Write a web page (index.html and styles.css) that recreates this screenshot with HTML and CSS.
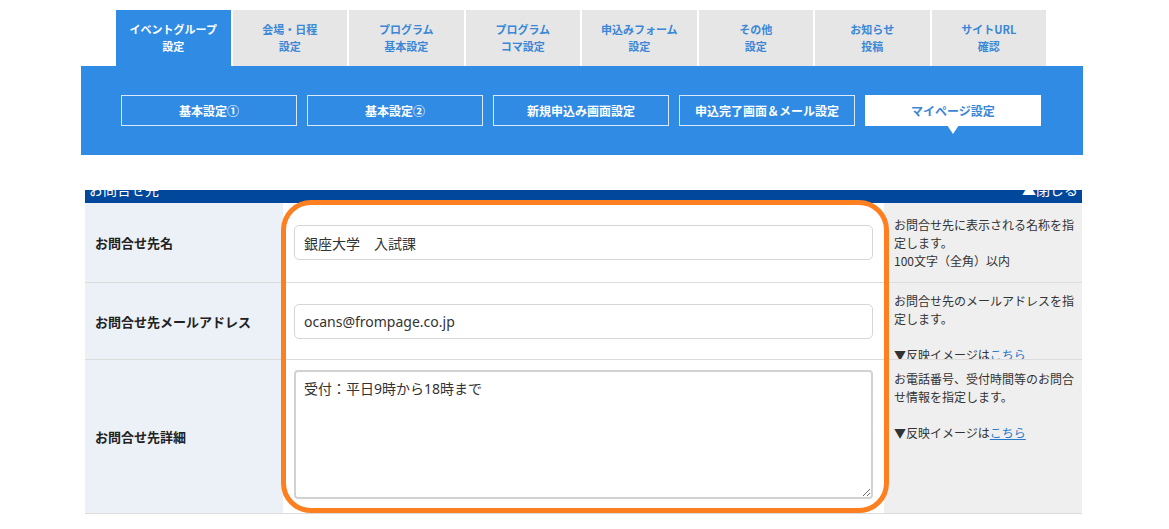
FILE: index.html
```html
<!DOCTYPE html>
<html lang="ja">
<head>
    <meta charset="UTF-8">
    <meta name="viewport" content="width=device-width, initial-scale=1.0">
    <title>お問合せ先設定</title>
    <link rel="stylesheet" href="styles.css">
</head>
<body>

    <!-- Step navigation -->
    <nav class="step-nav">
        <ul class="tabs">
            <li class="tab is-active">イベントグループ<br>設定</li>
            <li class="tab">会場・日程<br>設定</li>
            <li class="tab">プログラム<br>基本設定</li>
            <li class="tab">プログラム<br>コマ設定</li>
            <li class="tab">申込みフォーム<br>設定</li>
            <li class="tab">その他<br>設定</li>
            <li class="tab">お知らせ<br>投稿</li>
            <li class="tab">サイトURL<br>確認</li>
        </ul>
        <div class="subnav">
            <a class="sub-btn">基本設定①</a>
            <a class="sub-btn">基本設定②</a>
            <a class="sub-btn">新規申込み画面設定</a>
            <a class="sub-btn">申込完了画面＆メール設定</a>
            <a class="sub-btn is-current">マイページ設定</a>
        </div>
    </nav>

    <!-- Contact settings -->
    <section class="contact">
        <div class="contact-head">
            <span>お問合せ先</span>
            <span>▲閉じる</span>
        </div>

        <div class="row row--name">
            <div class="label">お問合せ先名</div>
            <div class="field">
                <input class="text-input" type="text" value="銀座大学　入試課">
            </div>
            <div class="help">
                お問合せ先に表示される名称を指定します。<br>
                100文字（全角）以内
            </div>
        </div>

        <div class="row row--mail">
            <div class="label">お問合せ先メールアドレス</div>
            <div class="field">
                <input class="text-input" type="text" value="ocans@frompage.co.jp">
            </div>
            <div class="help">
                お問合せ先のメールアドレスを指定します。<br>
                <br>
                ▼反映イメージは<a href="#">こちら</a>
            </div>
        </div>

        <div class="row row--detail">
            <div class="label">お問合せ先詳細</div>
            <div class="field">
                <textarea class="text-area">受付：平日9時から18時まで</textarea>
            </div>
            <div class="help">
                お電話番号、受付時間等のお問合せ情報を指定します。<br>
                <br>
                ▼反映イメージは<a href="#">こちら</a>
            </div>
        </div>

        <div class="highlight"></div>
    </section>

</body>
</html>
```

FILE: styles.css
```css
body {
    margin: 0;
    font-family: "Noto Sans", "Noto Sans CJK JP", sans-serif;
    color: #333;
    background-color: #fff;
}

/* step navigation */
.step-nav {
    margin: 10px 0 0 81px;
    width: 1002px;
}
.tabs {
    display: flex;
    gap: 2px;
    margin: 0;
    padding: 0 0 0 35px;
    list-style: none;
}
.tab {
    width: 114.5px;
    height: 56px;
    display: flex;
    align-items: center;
    justify-content: center;
    text-align: center;
    background-color: #e6e6e6;
    color: #3b86d6;
    font: bold 11px/17px "Noto Sans CJK JP", sans-serif;
}
.tab.is-active {
    background-color: #2f8be4;
    color: #fff;
}
.subnav {
    display: flex;
    align-items: flex-start;
    gap: 10px;
    height: 89px;
    box-sizing: border-box;
    padding: 29px 0 0 40px;
    background-color: #2f8be4;
}
.sub-btn {
    position: relative;
    display: flex;
    align-items: center;
    justify-content: center;
    width: 176px;
    height: 31px;
    box-sizing: border-box;
    border: 1px solid #d9e9fa;
    color: #fff;
    font: bold 12px "Noto Sans CJK JP", sans-serif;
}
.sub-btn.is-current {
    background-color: #fff;
    border-color: #fff;
    color: #3b86d6;
}
.sub-btn.is-current::after {
    content: "";
    position: absolute;
    top: 100%;
    left: 50%;
    margin-left: -6px;
    border-left: 6px solid transparent;
    border-right: 6px solid transparent;
    border-top: 9px solid #fff;
}

/* contact table */
.contact {
    position: relative;
    width: 997px;
    margin: 35px 0 0 85px;
}
.contact-head {
    display: flex;
    justify-content: space-between;
    height: 13px;
    overflow: hidden;
    padding: 0 4px;
    background-color: #01479b;
    color: #fff;
    font: 14px/16px "Noto Sans CJK JP", sans-serif;
}
.contact-head span {
    margin-top: -9px;
}
.row {
    display: grid;
    grid-template-columns: 198px 1fr 198px;
    border-bottom: 1px solid #dcdcdc;
}
.row--name {
    grid-template-rows: 79px;
}
.row--mail {
    grid-template-rows: 76px;
}
.row--detail {
    grid-template-rows: 153px;
}
.label {
    display: flex;
    align-items: center;
    padding-left: 10px;
    background-color: #ecf0f7;
    color: #222;
    font: bold 13px "Noto Sans CJK JP", sans-serif;
}
.field {
    display: flex;
    align-items: center;
    padding: 0 11px;
}
.row--detail .field {
    align-items: flex-start;
    padding-top: 10px;
}
.text-input {
    width: 100%;
    height: 35px;
    box-sizing: border-box;
    padding: 0 9px;
    border: 1px solid #d6d6d6;
    border-radius: 5px;
    color: #333;
    font: 14px "Noto Sans", "Noto Sans CJK JP", sans-serif;
}
.text-area {
    width: 100%;
    height: 129px;
    box-sizing: border-box;
    padding: 7px 8px;
    border: 2px solid #d2d2d2;
    border-radius: 4px;
    color: #333;
    font: 14px/20px "Noto Sans", "Noto Sans CJK JP", sans-serif;
}
.help {
    overflow: hidden;
    padding: 10px 4px 0 10px;
    background-color: #efefef;
    color: #333;
    font: 12px/18px "Noto Sans CJK JP", sans-serif;
}
.row--name .help {
    padding-top: 13px;
}
.row--mail .help {
    padding-top: 9px;
}
.help a {
    color: #2a78c9;
}

/* annotation frame */
.highlight {
    position: absolute;
    left: 196px;
    top: 10px;
    width: 608px;
    height: 313px;
    box-sizing: border-box;
    border: 5px solid #fd7f20;
    border-radius: 30px;
    pointer-events: none;
}
```
